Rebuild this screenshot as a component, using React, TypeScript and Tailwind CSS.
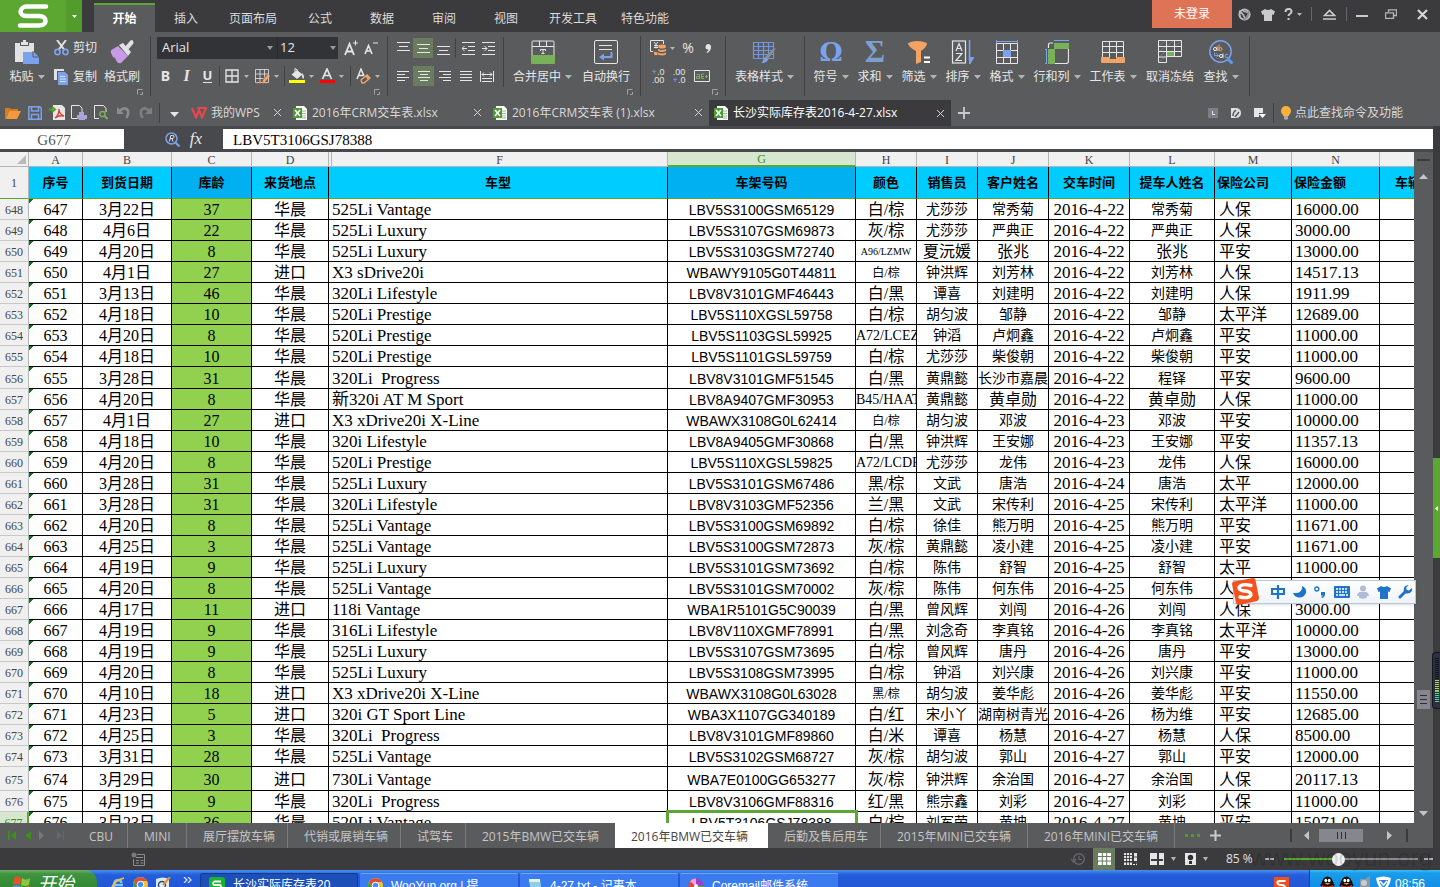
import React from "react";
import type { ReactNode } from "react";

type DrawProps = { w: number; h: number; children: ReactNode; className?: string };

function Draw({ w, h, children, className }: DrawProps) {
  return (
    <svg width={w} height={h} viewBox={`0 0 ${w} ${h}`} fill="none" className={className ?? "shrink-0"} aria-hidden="true">
      {children}
    </svg>
  );
}

const Caret = ({ light = false }: { light?: boolean }) => (
  <Draw w={7} h={4}>
    <path d="M0 0h7L3.5 4z" fill={light ? "#f5f5f5" : "#b4b5b7"} />
  </Draw>
);

const CornerMark = () => (
  <Draw w={6} h={6}>
    <path d="M.5 5.500V.5H5.500M3 5.500H5.500V3" stroke="#a0a1a3" />
  </Draw>
);

const ThinCross = () => (
  <Draw w={9} h={9}>
    <path d="M1 1l7 7M8 1L1 8" stroke="#d4d5d6" />
  </Draw>
);

/* ---------- Title bar ---------- */

const menuTabs = ["插入", "页面布局", "公式", "数据", "审阅", "视图", "开发工具", "特色功能"];

function TitleBar() {
  return (
    <header className="flex h-8 shrink-0 items-start bg-[#3b3b3d] text-xs text-[#dcdcdc]">
      <button aria-label="WPS 表格" className="flex h-8 w-[66px] items-center justify-center bg-[#5ba731]">
        <Draw w={32} h={26}>
          <path d="M29 3.500H9.500a6 6 0 0 0-6 5c0 3 3 4.500 6 4.500H22c4 0 6.500 2 6.500 5s-3 4.500-6.500 4.500H3" stroke="#fff" strokeWidth="4.500" strokeLinecap="round" strokeLinejoin="round" />
        </Draw>
      </button>
      <button aria-label="菜单" className="flex h-8 w-4 items-center justify-center bg-[#529c2b]">
        <Draw w={5} h={3}><path d="M0 0h5L2.500 3z" fill="#fff" /></Draw>
      </button>
      <nav className="ml-3 flex pt-[3px]">
        <button className="h-[29px] w-[61px] border-t-2 border-[#5ba731] bg-[#5a5b5d] font-bold text-white">开始</button>
        {menuTabs.map((t) => (
          <button key={t} className="h-[29px] min-w-[62px] px-3 pt-[2px]">{t}</button>
        ))}
      </nav>
      <div className="ml-auto flex h-7 items-center">
        <button className="h-7 w-20 bg-[#df7356] text-white">未登录</button>
        <button aria-label="社区" className="flex h-7 w-6 items-center justify-center">
          <Draw w={13} h={13}>
            <circle cx="6.500" cy="6.500" r="5" stroke="#b9babb" strokeWidth="2.200" />
            <path d="M1 3q5 3 6.500 9" stroke="#b9babb" strokeWidth="1.600" />
            <path d="M12 4Q7 5 4 2" stroke="#b9babb" strokeWidth="1.600" />
            <path d="M5.500 12Q10 9 11 3" stroke="#8d8e90" strokeWidth="1.600" />
          </Draw>
        </button>
        <button aria-label="皮肤" className="flex h-7 w-6 items-center justify-center">
          <Draw w={14} h={13}>
            <path d="M4 1q3 2 6 0l4 2.500-1.500 3.500L11 6.500V13H3V6.500L1.500 7 0 3.500z" fill="#c9cacb" />
          </Draw>
        </button>
        <button aria-label="帮助" className="flex h-7 w-[26px] items-center justify-center gap-1">
          <Draw w={9} h={12}>
            <path d="M1.500 4c0-4 6-4 6-.5 0 2.500-3 2-3 4.500" stroke="#c9cacb" strokeWidth="2" />
            <path d="M3.500 10h2v2h-2z" fill="#c9cacb" />
          </Draw>
          <Draw w={5} h={3}><path d="M0 0h5L2.500 3z" fill="#b4b5b7" /></Draw>
        </button>
        <span className="ml-[5px] h-[14px] w-px bg-[#66676a]" />
        <button aria-label="收起功能区" className="flex h-7 w-[34px] items-center justify-center">
          <Draw w={13} h={11}><path d="M1.500 6.500l5-5 5 5zM0 10h13" stroke="#c9cacb" strokeWidth="1.600" /></Draw>
        </button>
        <span className="h-[14px] w-px bg-[#66676a]" />
        <button aria-label="最小化" className="flex h-7 w-[30px] items-center justify-center pt-1">
          <Draw w={12} h={2}><path d="M0 1h12" stroke="#c9cacb" strokeWidth="2" /></Draw>
        </button>
        <button aria-label="还原" className="flex h-7 w-[27px] items-center justify-center">
          <Draw w={12} h={10}><path d="M3.500 3V.8h8v5.700H9M.5 3.800h8v5.500h-8z" stroke="#b4b5b7" strokeWidth="1.300" /></Draw>
        </button>
        <button aria-label="关闭" className="flex h-7 w-9 items-center justify-center">
          <Draw w={11} h={11}><path d="M1 1l9 9M10 1l-9 9" stroke="#d4d5d6" strokeWidth="2.200" /></Draw>
        </button>
      </div>
    </header>
  );
}

/* ---------- Ribbon ---------- */

function Group({ className, children, corner = false }: { className: string; children: ReactNode; corner?: boolean }) {
  return (
    <div className={`mt-1 flex h-[60px] shrink-0 flex-col border-r border-[#3f4042] pt-px ${className}`}>
      <div className="flex h-[52px]">{children}</div>
      {corner && <div className="flex justify-end pr-[7px]"><CornerMark /></div>}
    </div>
  );
}

function Big({ label, icon, className, caret = true }: { label: string; icon: ReactNode; className: string; caret?: boolean }) {
  return (
    <button className={`flex shrink-0 flex-col items-center pt-[3px] ${className}`}>
      <span className="flex h-7 items-start justify-center">{icon}</span>
      <span className="flex h-[18px] items-center gap-1 leading-[18px] whitespace-nowrap">
        {label}
        {caret && <Caret />}
      </span>
    </button>
  );
}

const Rows = ({ children, className = "" }: { children: ReactNode; className?: string }) => (
  <div className={`flex shrink-0 flex-col gap-[6px] ${className}`}>{children}</div>
);
const Row = ({ children, className = "" }: { children: ReactNode; className?: string }) => (
  <div className={`flex h-[22px] items-center ${className}`}>{children}</div>
);
const Sep = ({ className = "" }: { className?: string }) => <span className={`h-5 w-px shrink-0 bg-[#3f4042] ${className}`} />;

function IconBtn({ label, children, className = "w-[21px]" }: { label: string; children: ReactNode; className?: string }) {
  return (
    <button aria-label={label} className={`flex h-5 shrink-0 items-center justify-center ${className}`}>
      {children}
    </button>
  );
}

function DropBtn({ label, children }: { label: string; children: ReactNode }) {
  return (
    <button aria-label={label} className="flex h-5 w-[30px] shrink-0 items-center gap-1 pl-1">
      <span className="flex w-4 justify-center">{children}</span>
      <Draw w={5} h={3}><path d="M0 0h5L2.500 3z" fill="#b4b5b7" /></Draw>
    </button>
  );
}

const W = "#e6e6e6";
const BLUE = "#7ba2ec";
const GREEN = "#78b159";
const ORANGE = "#f2a365";

const lines = (d: string, w = 13, h = 11) => (
  <Draw w={w} h={h}><path d={d} stroke={W} /></Draw>
);

const PasteIcon = (
  <Draw w={26} h={25}>
    <path d="M1 3h5v3h9V3h5v9h-9v10H1z" fill="#e2e2e2" />
    <path d="M7 5V2h2V0h3v2h2v3z" fill="#e2e2e2" />
    <path d="M9 12h11l5 5v7H9z" fill={BLUE} />
    <path d="M19 11v6h6" stroke="#5a5b5d" />
  </Draw>
);
const CutIcon = (
  <Draw w={15} h={16}>
    <path d="M3 0l7.500 10M12 0L4.500 10" stroke="#e2e2e2" strokeWidth="2" />
    <circle cx="3.500" cy="12" r="2.600" stroke={BLUE} strokeWidth="1.600" />
    <circle cx="11.500" cy="12" r="2.600" stroke={BLUE} strokeWidth="1.600" />
  </Draw>
);
const CopyIcon = (
  <Draw w={15} h={16}>
    <path d="M0 0h10v2H3v9H0z" fill="#e2e2e2" />
    <path d="M4 3h7l3 3v10H4z" fill={BLUE} />
    <path d="M6 7.500h5M6 10h6M6 12.500h6" stroke="#d8e3fa" />
  </Draw>
);
const BrushIcon = (
  <Draw w={24} h={24}>
    <path d="M14 8l6-7q2-2 3 0t0 3l-6 7z" fill="#e2e2e2" />
    <path d="M9 5l4-2 8 9-3 4z" fill="#e2e2e2" />
    <path d="M8 6l10 10-7 7q-2 1-4-1l-2-4-2-1-2-4q-1-3 2-4z" fill="#c79be8" />
  </Draw>
);
const MergeIcon = (
  <Draw w={24} h={24}>
    <path d="M1 16V2q0-1 1-1h20q1 0 1 1v14M1 6.500h22M8.500 1v5.500M15.500 1v5.500" stroke={W} />
    <path d="M0 15h24v8q0 1-1 1H1q-1 0-1-1z" fill={GREEN} />
    <path d="M9.500 11V9.500h5V11M12 9.500v4M10.500 13.500h3" stroke={W} />
  </Draw>
);
const WrapIcon = (
  <Draw w={24} h={24}>
    <rect x=".5" y=".5" width="23" height="23" rx="1.500" stroke={W} />
    <path d="M5 5.500h13M5 9.500h13" stroke={W} />
    <path d="M17.500 12v5H9" stroke={BLUE} strokeWidth="2" />
    <path d="M5 17l5-3.500v7z" fill={BLUE} />
  </Draw>
);
const TableStyleIcon = (
  <Draw w={25} h={24}>
    <path d="M1.500 2.500h20v16h-20zM1.500 6.500h20M1.500 10.500h20M1.500 14.500h20M6.500 2v16M11.500 2v16M16.500 2v16" stroke="#6f95e3" strokeWidth="1.200" />
    <path d="M24 8l-8 11-3-2L21 9z" fill="#8e8f91" />
    <path d="M13 17l3 2q0 4-7 4 2-1 2-3z" fill={BLUE} />
  </Draw>
);
const FunnelIcon = (
  <Draw w={24} h={24}>
    <path d="M1 3q9-4 19 0 0 4-6 8v11l-5 2V11Q1 7 1 3z" fill={ORANGE} />
    <path d="M17 17.500h6M17 22h6" stroke="#fff" strokeWidth="2" />
  </Draw>
);
const SortIcon = (
  <Draw w={24} h={24}>
    <rect x="1.500" y="1" width="13" height="22" stroke={W} strokeWidth="1.200" />
    <path d="M5 11l3-7.500L11 11M6 8.500h4M5 13.500h6L5 20.500h6" stroke={W} strokeWidth="1.200" />
    <path d="M18.500 0v20" stroke={BLUE} strokeWidth="1.600" />
    <path d="M18 17h5.500l-4 7H18z" fill={BLUE} />
  </Draw>
);
const FormatIcon = (
  <Draw w={24} h={24}>
    <path d="M1 1.500h22M1.500 0v3M22.500 0v3" stroke={BLUE} />
    <path d="M1.500 3.500h21v20h-21zM8.500 3.500v20M15.500 3.500v20M1.500 10.500h21M1.500 17.500h21" stroke={W} />
    <path d="M8 10h8v7H8z" fill={BLUE} />
  </Draw>
);
const RowColIcon = (
  <Draw w={24} h={24}>
    <path d="M9 .5h15M1.500 9v15M0 9.500h2M0 23.500h2" stroke={BLUE} />
    <path d="M9 3h15v6H9zM3 9h7v15H3z" fill={GREEN} />
    <path d="M3.500 8V5q0-2 2-2H8M23.500 9v12q0 2.500-2.500 2.500H10" stroke={W} strokeWidth="1.200" />
  </Draw>
);
const WorksheetIcon = (
  <Draw w={24} h={24}>
    <path d="M1.500 18V1.500h21V18M1.500 6.500h21M1.500 12.500h21M8.500 1.500v16M15.500 1.500v16" stroke={W} />
    <path d="M1 17h8v2h6v-2h8q1 0 1 1v4q0 1-1 1H1q-1 0-1-1v-4q0-1 1-1z" fill={ORANGE} />
  </Draw>
);
const FreezeIcon = (
  <Draw w={24} h={24}>
    <path d="M1 6l6-5M9 6l6-5M17 6l6-5M1 12l6-5M1 17l6-5M1 22l6-5" stroke="#77787a" />
    <path d="M.5 .5h23v16h-15v6h-8zM.5 6.500h23M.5 11.500h23M8.500 .5v16M16.500 .5v16M.5 17h8" stroke={W} />
    <path d="M9 12h7v4H9z" fill={GREEN} />
  </Draw>
);
const FindIcon = (
  <Draw w={24} h={24}>
    <circle cx="11.500" cy="11.500" r="10.700" stroke={BLUE} strokeWidth="1.500" />
    <path d="M18.500 18.500l5 5" stroke="#5b9bf0" strokeWidth="3" />
    <ellipse cx="6" cy="9" rx="1.500" ry="1.600" stroke={W} />
    <path d="M8 6.500v4.500" stroke={W} />
    <path d="M10 4.500V11" stroke={ORANGE} />
    <ellipse cx="11.500" cy="9" rx="1.500" ry="1.600" stroke={ORANGE} />
    <path d="M5.500 12.500v3H9M7.500 13.500l2 2-2 2" stroke={BLUE} />
    <ellipse cx="12" cy="16" rx="1.500" ry="1.600" stroke={W} />
    <path d="M14 13.500V18" stroke={W} />
    <path d="M19 14.500q-3-1-3 1.500t3 1.500" stroke={BLUE} />
  </Draw>
);

function Ribbon() {
  return (
    <section aria-label="功能区" className="flex h-[67px] shrink-0 overflow-hidden bg-[#5a5b5d] text-xs text-[#e6e6e6]">
      <Group className="w-[151px]" corner>
        <Big label="粘贴" icon={PasteIcon} className="w-[54px]" />
        <Rows className="w-11">
          <button className="flex h-[22px] items-center gap-1">{CutIcon}剪切</button>
          <button className="flex h-[22px] items-center gap-1 pt-[2px]">{CopyIcon}复制</button>
        </Rows>
        <Big label="格式刷" icon={BrushIcon} className="w-12" caret={false} />
      </Group>

      <Group className="w-[237px]" corner>
        <Rows>
          <Row className="pl-[6px]">
            <span className="flex h-[22px] w-[120px] items-center bg-[#323336] pr-1">
              <select aria-label="字体" className="h-[22px] grow appearance-none bg-transparent pl-[5px] text-[13px] outline-none">
                <option>Arial</option>
              </select>
              <Draw w={6} h={4}><path d="M0 0h6L3 4z" fill="#9a9b9d" /></Draw>
            </span>
            <span className="flex h-[22px] w-[61px] items-center border-l border-[#28292b] bg-[#323336] pr-[2px]">
              <select aria-label="字号" className="h-[22px] w-12 grow appearance-none bg-transparent pl-[2px] text-[13px] outline-none">
                <option>12</option>
              </select>
              <Draw w={6} h={4}><path d="M0 0h6L3 4z" fill="#9a9b9d" /></Draw>
            </span>
            <IconBtn label="增大字号" className="ml-[3px] w-5">
              <Draw w={14} h={16}>
                <path d="M1 15L5.500 4 10 15M2.500 11.500h6" stroke={W} strokeWidth="1.800" />
                <path d="M9 3h5M11.500.5v5" stroke={W} />
              </Draw>
            </IconBtn>
            <IconBtn label="减小字号" className="w-5">
              <Draw w={14} h={16}>
                <path d="M1 14L4.500 5.500 8 14M2 11h5" stroke={W} strokeWidth="1.600" />
                <path d="M9 3h5" stroke={W} />
              </Draw>
            </IconBtn>
          </Row>
          <Row className="pl-1">
            <IconBtn label="加粗"><span className="font-['Noto_Sans'] text-sm leading-4 font-bold">B</span></IconBtn>
            <IconBtn label="倾斜"><span className="font-['Liberation_Serif'] text-base leading-4 font-bold italic">I</span></IconBtn>
            <IconBtn label="下划线"><span className="border-b border-[#e6e6e6] font-['Noto_Sans'] text-[13px] leading-[13px] font-bold">U</span></IconBtn>
            <Sep className="ml-px" />
            <DropBtn label="边框">
              <Draw w={14} h={14}><path d="M1 1h12v12H1zM7 1v12M1 7h12" stroke={W} strokeWidth="1.300" /></Draw>
            </DropBtn>
            <DropBtn label="绘制边框">
              <Draw w={15} h={15}>
                <path d="M.5.5h13v13H.5zM5 .5v13M9.500.5v8M.5 5h13M.5 9.500h8" stroke={W} strokeWidth=".8" />
                <path d="M7 14l1-3 5-6 2 2-5 6z" fill={ORANGE} />
                <path d="M1 14h12" stroke="#f06a3a" strokeDasharray="2 1" />
              </Draw>
            </DropBtn>
            <Sep className="ml-1" />
            <DropBtn label="填充颜色">
              <Draw w={16} h={16}>
                <path d="M2.500 6.500L8 2l5.500 4.500L8 11z" fill={W} />
                <path d="M6 .5v4M6 .5l3 2" stroke={W} />
                <path d="M13 5q3 3 1.500 6-2-1-1.500-6z" fill={W} />
                <path d="M0 12h16v3H0z" fill="#ff0" />
              </Draw>
            </DropBtn>
            <DropBtn label="字体颜色">
              <Draw w={16} h={16}>
                <path d="M3.500 11L8 1l4.500 10M5 7.500h6" stroke={W} strokeWidth="1.700" />
                <path d="M1 12h15v3H1z" fill="red" />
              </Draw>
            </DropBtn>
            <Sep className="ml-[5px]" />
            <DropBtn label="清除">
              <Draw w={15} h={16}>
                <path d="M1 11L5 1l3 7M2.500 7.500h5" stroke={W} strokeWidth="1.500" />
                <path d="M5 12l6-5 3 3-6 5H6z" stroke={ORANGE} strokeWidth="1.400" /><path d="M9 8.500l3 3 2-2-3-2.500z" fill={ORANGE} />
              </Draw>
            </DropBtn>
          </Row>
        </Rows>
      </Group>

      <Group className="w-[253px]" corner>
        <Rows className="h-[50px] w-[116px] border-r border-[#3f4042]">
          <Row className="pl-[5px]">
            <IconBtn label="顶端对齐" className="w-5 pb-1">{lines("M0 .5h13M2 4.500h9M0 8.500h13", 13, 9)}</IconBtn>
            <IconBtn label="垂直居中" className="w-5 bg-[#6a7c60]">{lines("M0 .5h13M2 4.500h9M0 8.500h13", 13, 9)}</IconBtn>
            <IconBtn label="底端对齐" className="w-5 pt-1">{lines("M0 .5h13M2 4.500h9M0 8.500h13", 13, 9)}</IconBtn>
            <Sep className="mx-[2px]" />
            <IconBtn label="减少缩进" className="w-5">{lines("M0 .5h13M6 4.500h7M6 8.500h7M0 12.500h13M0 6.500h5M2.500 4L0 6.500 2.500 9", 13, 13)}</IconBtn>
            <IconBtn label="增加缩进" className="w-5">{lines("M0 .5h13M6 4.500h7M6 8.500h7M0 12.500h13M0 6.500h5M2.500 4L5 6.500 2.500 9", 13, 13)}</IconBtn>
          </Row>
          <Row className="pl-1">
            <IconBtn label="左对齐">{lines("M0 .5h12M0 3.500h8M0 6.500h12M0 9.500h8", 12, 10)}</IconBtn>
            <IconBtn label="水平居中" className="w-[21px] bg-[#6a7c60]">{lines("M0 .5h12M2 3.500h8M0 6.500h12M2 9.500h8", 12, 10)}</IconBtn>
            <IconBtn label="右对齐">{lines("M0 .5h12M4 3.500h8M0 6.500h12M4 9.500h8", 12, 10)}</IconBtn>
            <IconBtn label="两端对齐">{lines("M0 .5h12M0 3.500h12M0 6.500h12M0 9.500h12", 12, 10)}</IconBtn>
            <IconBtn label="分散对齐">{lines("M.5 0v11M13.500 0v11M2 3.500h10M4 1.500L2 3.500l2 2M10 1.500l2 2-2 2M2 7.500h10M2 10.500h10", 14, 11)}</IconBtn>
          </Row>
        </Rows>
        <Big label="合并居中" icon={MergeIcon} className="w-[77px]" />
        <Big label="自动换行" icon={WrapIcon} className="w-[50px]" caret={false} />
      </Group>

      <Group className="w-[85px]" corner>
        <Rows>
          <Row className="pl-[5px]">
            <DropBtn label="会计格式">
              <Draw w={16} h={16}>
                <path d="M3 11.500H.5V.5h13V4" stroke={W} />
                <path d="M4 2l2 2.500L8 2M6 4.500v4M4 5.500h4M4 7.500h4" stroke={W} />
                <ellipse cx="12" cy="6.500" rx="4" ry="2" fill={ORANGE} />
                <path d="M8 9q4 2 8 0v2q-4 2-8 0zM8 12.500q4 2 8 0v2q-4 2-8 0zM4 11.500q2 1 3.500.5v3q-2 .5-3.500-.5z" fill={ORANGE} />
              </Draw>
            </DropBtn>
            <IconBtn label="百分比" className="ml-[2px] w-5"><span className="text-sm leading-4">%</span></IconBtn>
            <IconBtn label="千位分隔" className="w-5">
              <Draw w={6} h={9}><path d="M3 0q3 0 3 3 0 4-4 6l-.5-1Q3.500 7 3.500 5.500H3Q.5 5.500.5 3T3 0z" fill={W} /></Draw>
            </IconBtn>
          </Row>
          <Row className="gap-px pl-[7px]">
            <IconBtn label="增加小数" className="w-5 flex-col">
              <span className="font-['Liberation_Sans'] text-[9px] leading-2"><span className="text-[#7ba2ec]">+</span>.0</span>
              <span className="font-['Liberation_Sans'] text-[9px] leading-2">.00</span>
            </IconBtn>
            <IconBtn label="减少小数" className="w-5 flex-col">
              <span className="font-['Liberation_Sans'] text-[9px] leading-2">.00</span>
              <span className="font-['Liberation_Sans'] text-[9px] leading-2"><span className="text-[#7ba2ec]">+</span>.0</span>
            </IconBtn>
            <IconBtn label="单元格格式" className="ml-1 w-4">
              <Draw w={16} h={12}>
                <path d="M.5.5h15v11H.500z" stroke={W} />
                <path d="M2.500 4.500h3v4h-3v-2h3M10 4H7.500v4.500H10M7.500 6.500H10M11 6.500h3M12.500 5v3" stroke={GREEN} />
              </Draw>
            </IconBtn>
          </Row>
        </Rows>
      </Group>

      <Group className="w-[79px]">
        <Big label="表格样式" icon={TableStyleIcon} className="w-[77px]" />
      </Group>

      <Group className="w-[445px] pl-1">
        <Big label="符号" className="w-11" icon={<span className="font-['DejaVu_Serif'] text-[26px] leading-6 font-bold text-[#7ba2ec]">Ω</span>} />
        <Big label="求和" className="w-11" icon={<span className="font-['Liberation_Serif'] text-[31px] leading-6 font-bold text-[#7f9fd0]">Σ</span>} />
        <Big label="筛选" className="w-11" icon={FunnelIcon} />
        <Big label="排序" className="w-11" icon={SortIcon} />
        <Big label="格式" className="w-11" icon={FormatIcon} />
        <Big label="行和列" className="w-14" icon={RowColIcon} />
        <Big label="工作表" className="w-14" icon={WorksheetIcon} />
        <Big label="取消冻结" className="w-[58px]" icon={FreezeIcon} caret={false} />
        <Big label="查找" className="w-11" icon={FindIcon} />
      </Group>
    </section>
  );
}

/* ---------- Quick access and document tabs ---------- */

const SheetFileIcon = () => (
  <Draw w={16} h={16}>
    <path d="M4 1h8l3 3v11H4z" fill="#fff" />
    <path d="M10 6h4M10 8.500h4M10 11h4M10 13h4" stroke="#9bb48c" />
    <path d="M1 3h9v10H1z" fill="#4b9a32" />
    <path d="M3 5l5 6M8 5l-5 6" stroke="#fff" strokeWidth="1.600" />
  </Draw>
);

function DocTab({ title, icon, className }: { title: string; icon: ReactNode; className: string }) {
  return (
    <div className={`flex h-[26px] shrink-0 items-center gap-1 pr-[6px] pl-1 ${className}`}>
      {icon}
      <button className="grow text-left whitespace-nowrap">{title}</button>
      <button aria-label={`关闭 ${title}`}><ThinCross /></button>
    </div>
  );
}

function DocBar() {
  return (
    <div className="flex h-[27px] shrink-0 items-center bg-[#5a5b5d] pl-[2px] text-xs text-[#d8d9da]">
      <IconBtn label="打开" className="w-[22px]">
        <Draw w={16} h={12}><path d="M0 1h5l1 1h7v2H4L1 12H0z" fill="#d97a1c" /><path d="M4 4h12l-4 8H1z" fill="#f59a3a" /></Draw>
      </IconBtn>
      <IconBtn label="保存" className="w-[22px]">
        <Draw w={14} h={14}><path d="M.8.8h11l1.500 1.500v11H.8z" stroke={BLUE} strokeWidth="1.500" /><path d="M3.500 1v4h7V1M3.500 13V8.500h7V13" stroke={BLUE} strokeWidth="1.500" /></Draw>
      </IconBtn>
      <IconBtn label="输出为PDF" className="w-[22px]">
        <Draw w={16} h={15}>
          <path d="M4 0h9l3 3v12H4z" fill="#e6e6e6" />
          <path d="M0 4.500h4M3 2l3 2.500L3 7" stroke="#56a02c" strokeWidth="2" />
          <path d="M6 13q4-3 4-9 0 5 5 7-5-1-9 2z" stroke="#e03c31" strokeWidth="1.300" />
        </Draw>
      </IconBtn>
      <IconBtn label="打印" className="w-[22px]">
        <Draw w={16} h={15}><path d="M7 13.500H.5V.5h8L11 3v4" stroke={W} /><path d="M8 7h5v3H8zM6 10h10v4h-2v1H8v-1H6z" fill="#a9a3dc" /></Draw>
      </IconBtn>
      <IconBtn label="打印预览" className="w-[22px]">
        <Draw w={14} h={15}><path d="M5 13.500H.5V.5h9l2.500 3V7" stroke={W} /><circle cx="8.500" cy="9" r="2.600" stroke={GREEN} strokeWidth="1.500" /><path d="M10.500 11l3 3" stroke={GREEN} strokeWidth="2" /></Draw>
      </IconBtn>
      <IconBtn label="撤消" className="w-[22px]">
        <Draw w={13} h={13}><path d="M2 5.500Q6 1 9.500 3t0 9" stroke="#8b8c8e" strokeWidth="2.600" /><path d="M0 1v7h7z" fill="#8b8c8e" /></Draw>
      </IconBtn>
      <IconBtn label="恢复" className="w-[22px]">
        <Draw w={13} h={13}><path d="M11 5.500Q7 1 3.500 3t0 9" stroke="#7e7f81" strokeWidth="2.600" /><path d="M13 1v7H6z" fill="#7e7f81" /></Draw>
      </IconBtn>
      <Sep className="mx-[3px]" />
      <IconBtn label="自定义" className="mr-[2px] w-[22px] pt-1">
        <Draw w={9} h={5}><path d="M0 0h9L4.500 5z" fill="#e6e6e6" /></Draw>
      </IconBtn>
      <DocTab title="我的WPS" className="w-[101px]" icon={
        <Draw w={16} h={12}><path d="M1 1l4 9.500L8 3l3 7.500L15 1H6.500" stroke="#e5484b" strokeWidth="2.200" /></Draw>
      } />
      <DocTab title="2016年CRM交车表.xlsx" className="w-[200px]" icon={<SheetFileIcon />} />
      <DocTab title="2016年CRM交车表 (1).xlsx" className="w-[221px]" icon={<SheetFileIcon />} />
      <DocTab title="长沙实际库存表2016-4-27.xlsx" className="w-[242px] self-end bg-[#3b3b3d] text-white" icon={<SheetFileIcon />} />
      <IconBtn label="新建" className="w-[26px]">
        <Draw w={12} h={12}><path d="M6 0v12M0 6h12" stroke="#c9cacb" strokeWidth="1.800" /></Draw>
      </IconBtn>
      <div className="mr-[37px] ml-auto flex items-center">
        <IconBtn label="在线" className="w-[23px]">
          <Draw w={10} h={10}><path d="M0 0h10v10H0z" fill="#7c7e8a" /><path d="M4.500 3v3.500H7" stroke="#e6e6e6" /></Draw>
        </IconBtn>
        <IconBtn label="文档漫游" className="w-[23px]">
          <Draw w={10} h={10}><path d="M0 0h6q4 1 4 5t-4 5H0z" fill="#dedede" /><path d="M2 8q0-4 3-6M4 9l4-5" stroke="#55565a" strokeWidth="1.500" /></Draw>
        </IconBtn>
        <IconBtn label="窗口" className="w-[25px]">
          <Draw w={12} h={10}><path d="M0 0h9v5H5v4H0z" fill="#e6e6e6" /><path d="M5 6h7l-3.500 4z" fill="#fff" /></Draw>
        </IconBtn>
        <Sep className="h-4" />
        <button className="flex items-center gap-1 pl-[7px]">
          <Draw w={10} h={14}><circle cx="5" cy="5" r="5" fill="#f7b13c" /><path d="M2 9h6v1H2z" fill="#f7b13c" /><path d="M3 10h4v3l-2 1-2-1z" fill="#a5a8b5" /></Draw>
          点此查找命令及功能
        </button>
      </div>
    </div>
  );
}

function FormulaBar() {
  return (
    <div className="flex h-[26px] shrink-0 items-center bg-[#48494d]">
      <input aria-label="名称框" defaultValue="G677" className="h-5 w-[124px] bg-white pt-[2px] pr-4 text-center font-['Liberation_Serif'] text-[15px] leading-5 text-[#555]" />
      <div className="flex w-[99px] items-center justify-end gap-[6px] pr-[17px]">
        <Draw w={15} h={15}>
          <circle cx="6.500" cy="6.500" r="5.500" stroke={BLUE} strokeWidth="1.500" />
          <path d="M10.500 10.500l4 4" stroke={BLUE} strokeWidth="2.200" />
          <path d="M4.500 9.500l1.300-6h2q1.700 0 1.200 1.800-.3 1.200-2 1.200H5.500M7 6.500l1 3" stroke="#e6e6e6" />
        </Draw>
        <button aria-label="插入函数" className="w-5 font-['Liberation_Serif'] text-[17px] leading-5 text-[#e6e6e6] italic">fx</button>
      </div>
      <input aria-label="编辑栏" defaultValue="LBV5T3106GSJ78388" className="h-5 min-w-0 grow bg-white pt-[2px] pl-[10px] font-['Liberation_Serif'] text-[15px] leading-5 text-black" />
    </div>
  );
}

/* ---------- Worksheet ---------- */

const raw = `648|647|3月22日|37|华晨|525Li Vantage|LBV5S3100GSM65129|白/棕|尤莎莎|常秀菊|2016-4-22|常秀菊|人保|16000.00
649|648|4月6日|22|华晨|525Li Luxury|LBV5S3107GSM69873|灰/棕|尤莎莎|严典正|2016-4-22|严典正|人保|3000.00
650|649|4月20日|8|华晨|525Li Luxury|LBV5S3103GSM72740|A96/LZMW|夏沅媛|张兆|2016-4-22|张兆|平安|13000.00
651|650|4月1日|27|进口|X3 sDrive20i|WBAWY9105G0T44811|白/棕|钟洪辉|刘芳林|2016-4-22|刘芳林|人保|14517.13
652|651|3月13日|46|华晨|320Li Lifestyle|LBV8V3101GMF46443|白/黑|谭喜|刘建明|2016-4-22|刘建明|人保|1911.99
653|652|4月18日|10|华晨|520Li Prestige|LBV5S110XGSL59758|白/棕|胡匀波|邹静|2016-4-22|邹静|太平洋|12689.00
654|653|4月20日|8|华晨|520Li Prestige|LBV5S1103GSL59925|A72/LCEZ|钟滔|卢炯鑫|2016-4-22|卢炯鑫|平安|11000.00
655|654|4月18日|10|华晨|520Li Prestige|LBV5S1101GSL59759|白/棕|尤莎莎|柴俊朝|2016-4-22|柴俊朝|平安|11000.00
656|655|3月28日|31|华晨|320Li  Progress|LBV8V3101GMF51545|白/黑|黄鼎懿|长沙市嘉晨|2016-4-22|程铎|平安|9600.00
657|656|4月20日|8|华晨|新320i AT M Sport|LBV8A9407GMF30953|B45/HAAT|黄鼎懿|黄卓勋|2016-4-22|黄卓勋|人保|11000.00
658|657|4月1日|27|进口|X3 xDrive20i X-Line|WBAWX3108G0L62414|白/棕|胡匀波|邓波|2016-4-23|邓波|平安|10000.00
659|658|4月18日|10|华晨|320i Lifestyle|LBV8A9405GMF30868|白/黑|钟洪辉|王安娜|2016-4-23|王安娜|平安|11357.13
660|659|4月20日|8|华晨|520Li Prestige|LBV5S110XGSL59825|A72/LCDF|尤莎莎|龙伟|2016-4-23|龙伟|人保|16000.00
661|660|3月28日|31|华晨|525Li Luxury|LBV5S3101GSM67486|黑/棕|文武|唐浩|2016-4-24|唐浩|太平|12000.00
662|661|3月28日|31|华晨|320Li Lifestyle|LBV8V3103GMF52356|兰/黑|文武|宋传利|2016-4-25|宋传利|太平洋|11000.00
663|662|4月20日|8|华晨|525Li Vantage|LBV5S3100GSM69892|白/棕|徐佳|熊万明|2016-4-25|熊万明|平安|11671.00
664|663|4月25日|3|华晨|525Li Vantage|LBV5S3100GSM72873|灰/棕|黄鼎懿|凌小建|2016-4-25|凌小建|平安|11671.00
665|664|4月19日|9|华晨|525Li Luxury|LBV5S3101GSM73692|白/棕|陈伟|舒智|2016-4-25|舒智|太平|11000.00
666|665|4月20日|8|华晨|525Li Vantage|LBV5S3101GSM70002|灰/棕|陈伟|何东伟|2016-4-25|何东伟|人保|11000.00
667|666|4月17日|11|进口|118i Vantage|WBA1R5101G5C90039|白/黑|曾风辉|刘闯|2016-4-26|刘闯|人保|3000.00
668|667|4月19日|9|华晨|316Li Lifestyle|LBV8V110XGMF78991|白/黑|刘念奇|李真铭|2016-4-26|李真铭|太平洋|10000.00
669|668|4月19日|9|华晨|525Li Luxury|LBV5S3107GSM73695|白/棕|曾风辉|唐丹|2016-4-26|唐丹|平安|13000.00
670|669|4月20日|8|华晨|525Li Luxury|LBV5S3108GSM73995|白/棕|钟滔|刘兴康|2016-4-26|刘兴康|平安|11000.00
671|670|4月10日|18|进口|X3 xDrive20i X-Line|WBAWX3108G0L63028|黑/棕|胡匀波|姜华彪|2016-4-26|姜华彪|平安|11550.00
672|671|4月23日|5|进口|320i GT Sport Line|WBA3X1107GG340189|白/红|宋小丫|湖南树青光|2016-4-26|杨为维|平安|12685.00
673|672|4月25日|3|华晨|320Li  Progress|LBV8V3101GMF89860|白/米|谭喜|杨慧|2016-4-27|杨慧|人保|8500.00
674|673|3月31日|28|华晨|525Li Vantage|LBV5S3102GSM68727|灰/棕|胡匀波|郭山|2016-4-27|郭山|平安|12000.00
675|674|3月29日|30|进口|730Li Vantage|WBA7E0100GG653277|灰/棕|钟洪辉|余治国|2016-4-27|余治国|人保|20117.13
676|675|4月19日|9|华晨|320Li  Progress|LBV8V3106GMF88316|红/黑|熊宗鑫|刘彩|2016-4-27|刘彩|人保|11000.00
677|676|3月23日|36|华晨|520Li Vantage|LBV5T3106GSJ78388|白/棕|刘军荣|黄坤|2016-4-27|黄坤|平安|15071.00`;

const data = raw.split("\n").map((line) => line.split("|"));

const columns = [
  { id: "A", title: "序号", col: "w-[54px]" },
  { id: "B", title: "到货日期", col: "w-[89px]" },
  { id: "C", title: "库龄", col: "w-[80px]" },
  { id: "D", title: "来货地点", col: "w-[77px]" },
  { id: "F", title: "车型", col: "w-[339px]" },
  { id: "G", title: "车架号码", col: "w-[188px]" },
  { id: "H", title: "颜色", col: "w-[61px]" },
  { id: "I", title: "销售员", col: "w-[61px]" },
  { id: "J", title: "客户姓名", col: "w-[71px]" },
  { id: "K", title: "交车时间", col: "w-[81px]" },
  { id: "L", title: "提车人姓名", col: "w-[85px]" },
  { id: "M", title: "保险公司", col: "w-[77px]" },
  { id: "N", title: "保险金额", col: "w-[88px]" },
];

const textStyle: Record<string, string> = {
  A: "justify-center text-base",
  B: "justify-center text-base",
  C: "justify-center text-base",
  D: "justify-center text-base",
  F: "pl-[3px] text-[17px]",
  G: "justify-center font-['Liberation_Sans'] text-sm",
  H: "justify-center text-base",
  I: "justify-center text-sm",
  J: "justify-center text-sm",
  K: "justify-center text-[17px]",
  L: "justify-center text-sm",
  M: "pl-1 text-base",
  N: "pl-[3px] text-[17px]",
};

const largeNames = new Set(["夏沅媛", "张兆", "黄卓勋"]);
const smallColour = new Set(["651", "658", "671"]);

const rowHeight: Record<string, string> = { "656": "h-[22px]", "675": "h-6" };

function styleFor(id: string, row: string, value: string) {
  if (largeNames.has(value)) return "justify-center text-base";
  if (value === "A96/LZMW") return "justify-center text-[10px]";
  if (id === "H" && smallColour.has(row)) return "justify-center text-xs";
  if (id === "H" && value.length > 5) return "justify-start text-sm";
  return textStyle[id];
}

function Cell({ id, row, value }: { id: string; row: string; value: string }) {
  const selected = id === "G" && row === "677";
  const fill =
    id === "C"
      ? "bg-[#92d050]"
      : id === "A"
        ? "bg-[linear-gradient(135deg,#007a1f_3px,#fff_3px)]"
        : "bg-white";
  return (
    <td className={`border-r border-b border-black p-0 ${fill} ${selected ? "relative z-10 outline-[3px] -outline-offset-1 outline-[#5ba731]" : ""}`}>
      <div className={`flex h-5 items-center overflow-hidden pt-[2px] leading-5 whitespace-pre ${styleFor(id, row, value)}`}>{value}</div>
    </td>
  );
}

function Sheet() {
  return (
    <div className="min-w-0 grow overflow-hidden bg-white">
      <table className="w-full table-fixed border-separate border-spacing-0 font-['Liberation_Serif','Noto_Sans_CJK_SC',serif] text-black">
        <colgroup>
          <col className="w-[29px]" />
          {columns.map((c) => <col key={c.id} className={c.col} />)}
          <col />
        </colgroup>
        <thead>
          <tr className="h-[15px] text-xs leading-3 text-[#444]">
            <th className="border-r border-b border-[#b5b5b5] bg-[#f0f0f0] p-0">
              <div className="flex justify-end pr-[2px]"><Draw w={9} h={9}><path d="M9 0v9H0z" fill="#b9b9b9" /></Draw></div>
            </th>
            {columns.map((c) => (
              <th
                key={c.id}
                scope="col"
                className={
                  c.id === "G"
                    ? "border-r border-b-2 border-r-[#b5b5b5] border-b-[#5ba731] bg-[#d7e6cf] p-0 font-normal text-[#3d8f1c]"
                    : "border-r border-b border-[#b5b5b5] bg-[#f0f0f0] p-0 font-normal"
                }
              >
                {c.id === "F" ? (
                  <div className="ml-[2px] h-[14px] border-l border-[#b5b5b5] pt-[2px]">{c.id}</div>
                ) : (
                  <div className="h-[13px] pt-px">{c.id}</div>
                )}
              </th>
            ))}
            <th className="border-b border-[#b5b5b5] bg-[#f0f0f0] p-0" />
          </tr>
          <tr className="h-8 text-[13px] leading-5">
            <th scope="row" className="border-r border-b border-r-[#b5b5b5] border-b-[#5ba731] bg-[#f0f0f0] p-0 text-xs font-normal text-[#444]">1</th>
            {columns.map((c) => (
              <th
                key={c.id}
                className={`border-r border-b border-r-black border-b-[#5ba731] p-0 pt-px font-bold whitespace-nowrap ${c.id === "C" || c.id === "G" ? "bg-[#00b0f0]" : "bg-[#00ccff]"} ${c.id === "M" || c.id === "N" ? "pl-[2px] text-left" : ""}`}
              >
                {c.title}
              </th>
            ))}
            <th className="overflow-hidden border-b border-[#5ba731] bg-[#00ccff] p-0 pl-[15px] text-left font-bold whitespace-nowrap">车辆</th>
          </tr>
        </thead>
        <tbody>
          {data.map(([row, ...values]) => (
            <tr key={row} className={rowHeight[row] ?? "h-[21px]"}>
              <th
                scope="row"
                className={
                  row === "677"
                    ? "border-r-2 border-b border-r-[#5ba731] border-b-[#c8c8c8] bg-[#d7e6cf] p-0 text-xs font-normal text-[#3d8f1c]"
                    : "border-r border-b border-r-[#b5b5b5] border-b-[#c8c8c8] bg-[#f0f0f0] p-0 text-xs font-normal text-[#444]"
                }
              >
                <div className="h-5 pt-[2px] leading-[18px]">{row}</div>
              </th>
              {values.map((v, i) => <Cell key={columns[i].id} id={columns[i].id} row={row} value={v} />)}
              <td className="border-b border-black bg-white p-0" />
            </tr>
          ))}
        </tbody>
      </table>
    </div>
  );
}

function VerticalScroll() {
  return (
    <div className="flex w-[19px] shrink-0 flex-col items-center bg-[#5a5b5d] pt-[7px] pb-[7px]">
      <span className="h-[2px] w-[13px] bg-[#3b3b3d]" />
      <button aria-label="向上滚动" className="mt-[13px]"><Draw w={9} h={5}><path d="M4.500 0L9 5H0z" fill="#c4c5c7" /></Draw></button>
      <span className="flex-[50]" />
      <span className="flex h-[19px] w-[13px] items-center justify-center bg-[#85868e]">
        <Draw w={7} h={9}><path d="M0 .5h7M0 4.500h7M0 8.500h7" stroke="#2e2f31" /></Draw>
      </span>
      <span className="flex-[10]" />
      <button aria-label="向下滚动"><Draw w={9} h={5}><path d="M0 0h9L4.500 5z" fill="#c4c5c7" /></Draw></button>
    </div>
  );
}

const sheetTabs = [
  { name: "CBU", cls: "w-[55px] border-r border-[#7a7b7d]" },
  { name: "MINI", cls: "w-[59px] border-r border-[#7a7b7d]" },
  { name: "展厅摆放车辆", cls: "w-[101px] border-r border-[#7a7b7d]" },
  { name: "代销或展销车辆", cls: "w-[113px] border-r border-[#7a7b7d]" },
  { name: "试驾车", cls: "w-[65px] border-r border-[#7a7b7d]" },
  { name: "2015年BMW已交车辆", cls: "w-[149px]" },
  { name: "2016年BMW已交车辆", cls: "w-[153px] bg-white text-[#444]" },
  { name: "后勤及售后用车", cls: "w-[113px] border-r border-[#7a7b7d]" },
  { name: "2015年MINI已交车辆", cls: "w-[147px] border-r border-[#7a7b7d]" },
  { name: "2016年MINI已交车辆", cls: "w-[147px] border-r border-[#7a7b7d]" },
];

function SheetTabs() {
  return (
    <div className="flex h-[25px] shrink-0 items-center bg-[#5a5b5d] text-xs text-[#c4c5c6]">
      <div className="flex w-[73px] shrink-0 items-center pl-2">
        <button aria-label="第一张" className="w-[17px]"><Draw w={8} h={9}><path d="M.8 0v9" stroke="#3f8f1a" strokeWidth="1.500" /><path d="M8 0v9L2.500 4.500z" fill="#3f8f1a" /></Draw></button>
        <button aria-label="上一张" className="w-[14px]"><Draw w={6} h={9}><path d="M6 0v9L0 4.500z" fill="#3f8f1a" /></Draw></button>
        <button aria-label="下一张" className="w-[18px]"><Draw w={6} h={9}><path d="M0 0v9l5-4.500z" fill="#77787a" /></Draw></button>
        <button aria-label="最后一张"><Draw w={8} h={9}><path d="M0 0v9l5-4.500z" fill="#66676a" /><path d="M6.500 0v9" stroke="#66676a" /></Draw></button>
      </div>
      {sheetTabs.map((t) => (
        <button key={t.name} className={`h-[25px] shrink-0 pt-[2px] pl-4 text-left whitespace-nowrap ${t.cls}`}>{t.name}</button>
      ))}
      <button aria-label="更多工作表" className="ml-[10px]">
        <Draw w={15} h={3}><path d="M0 0h3v3H0zM6 0h3v3H6zM12 0h3v3h-3z" fill="#4f9e24" /></Draw>
      </button>
      <button aria-label="插入工作表" className="ml-[10px]">
        <Draw w={11} h={11}><path d="M5.500 0v11M0 5.500h11" stroke="#c9cacb" strokeWidth="2" /></Draw>
      </button>
      <div className="mr-[25px] ml-auto flex items-center">
        <span className="h-[13px] w-[2px] bg-[#3b3b3d]" />
        <button aria-label="向左滚动" className="ml-3"><Draw w={5} h={9}><path d="M5 0v9L0 4.500z" fill="#c4c5c7" /></Draw></button>
        <span className="ml-[10px] flex h-[13px] w-11 items-center justify-center bg-[#85868e]">
          <Draw w={9} h={7}><path d="M.5 0v7M4.500 0v7M8.500 0v7" stroke="#2e2f31" /></Draw>
        </span>
        <button aria-label="向右滚动" className="mr-[14px] ml-6"><Draw w={5} h={9}><path d="M0 0v9l5-4.500z" fill="#c4c5c7" /></Draw></button>
        <span className="h-[13px] w-[2px] bg-[#3b3b3d]" />
      </div>
    </div>
  );
}

function StatusBar() {
  return (
    <div className="relative flex h-[22px] shrink-0 items-center bg-[#3b3b3d] text-xs text-[#e0e0e0]">
      <span className="ml-[131px]">
        <Draw w={14} h={14}>
          <circle cx="3" cy="3" r="2.500" fill="#77787a" />
          <path d="M6 2.500h7.500v11h-11V7M5 5.500h7M5 8.500h3M9.500 8.500h3M5 11h3M9.500 11h3" stroke="#8b8c8e" />
        </Draw>
      </span>
      <span className="absolute right-2 bottom-0 font-['Liberation_Sans'] text-2xl leading-6 text-black/15">www.wooyun.org</span>
      <div className="ml-auto flex items-center">
        <IconBtn label="历史" className="w-[30px]">
          <Draw w={14} h={12}><circle cx="8" cy="6" r="5.300" stroke="#66676a" strokeWidth="1.400" /><path d="M8 3v3.500h3M0 6l2.500 3L5 6" stroke="#66676a" strokeWidth="1.200" /></Draw>
        </IconBtn>
        <button aria-label="普通视图" className="flex h-[22px] w-[22px] items-center justify-center bg-[#6a7c60]">
          <Draw w={13} h={12}><path d="M0 0h13v12H0z" fill="#fff" /><path d="M0 3.500h13M0 8h13M4.300 0v12M8.700 0v12" stroke="#6a7c60" /></Draw>
        </button>
        <IconBtn label="分页预览" className="w-[30px]">
          <Draw w={13} h={12}><path d="M0 0h8v8H0zM10 0h3v8h-3zM0 9.500h8V12H0z" fill="#e6e6e6" /><path d="M0 2.500h8M0 5.500h8M2.500 0v12M5.500 0v12M10 4h3M8 11h5M11 9v3" stroke="#3b3b3d" strokeWidth=".9" /><path d="M9 11.500h4V9" stroke="#e6e6e6" strokeDasharray="2 1" /></Draw>
        </IconBtn>
        <button aria-label="阅读模式" className="ml-[5px] flex items-center gap-[7px]">
          <Draw w={14} h={12}><path d="M0 0h14v12H0z" fill="#e6e6e6" /><path d="M8 0v12M1 7h12" stroke="#3b3b3d" strokeWidth="2" /></Draw>
          <Draw w={5} h={4}><path d="M0 0h5L2.500 4z" fill="#b4b5b7" /></Draw>
        </button>
        <button aria-label="护眼模式" className="ml-[9px] flex items-center gap-[7px]">
          <Draw w={11} h={12}><path d="M0 0h11v12H0z" fill="#e6e6e6" /><circle cx="5.500" cy="4.500" r="2.700" fill="#2e2f31" /><path d="M4 8h3v3H4z" fill="#2e2f31" /></Draw>
          <Draw w={5} h={4}><path d="M0 0h5L2.500 4z" fill="#b4b5b7" /></Draw>
        </button>
        <span className="ml-[18px] w-[39px] whitespace-pre">85 %</span>
        <button aria-label="缩小"><Draw w={9} h={2}><path d="M0 1h9" stroke="#d4d5d6" strokeWidth="1.600" strokeDasharray="4 1" /></Draw></button>
        <input
          type="range"
          aria-label="显示比例"
          min={10}
          max={200}
          defaultValue={85}
          className="mr-[6px] ml-[10px] h-3 w-[134px] appearance-none bg-[linear-gradient(90deg,#5ba731_40%,#8b8c8e_40%)] bg-[length:100%_2px] bg-center bg-no-repeat [&::-webkit-slider-thumb]:h-[13px] [&::-webkit-slider-thumb]:w-[13px] [&::-webkit-slider-thumb]:appearance-none [&::-webkit-slider-thumb]:rounded-full [&::-webkit-slider-thumb]:bg-[#f0f0f0]"
        />
        <button aria-label="放大" className="mr-[6px]"><Draw w={10} h={2}><path d="M0 1h10" stroke="#d4d5d6" strokeWidth="1.600" strokeDasharray="4 1" /></Draw></button>
      </div>
    </div>
  );
}

/* ---------- Desktop taskbar ---------- */

const ChromeIcon = () => (
  <Draw w={15} h={15}>
    <circle cx="7.500" cy="7.500" r="7.500" fill="#f2c230" />
    <path d="M1 4a7.500 7.500 0 0 1 13 0H7.500L4 9z" fill="#dd4b39" />
    <path d="M1 4l4 7 3 4A7.500 7.500 0 0 1 1 4z" fill="#3a9a48" />
    <circle cx="7.500" cy="7.500" r="3.300" fill="#4a8df0" stroke="#fff" />
  </Draw>
);

function TaskButton({ icon, title, active = false }: { icon: ReactNode; title: string; active?: boolean }) {
  return (
    <button className={`mt-[3px] flex h-6 w-[158px] shrink-0 items-center gap-2 overflow-hidden rounded-xs pl-2 whitespace-nowrap ${active ? "border border-[#123c8c] bg-[#1c50b8]" : "border-t border-[#6fa5f8] bg-[#3a7cf0]"}`}>
      {icon}
      {title}
    </button>
  );
}

const Penguin = () => (
  <Draw w={15} h={15}>
    <ellipse cx="7.500" cy="7.500" rx="5.500" ry="7" fill="#111" />
    <path d="M1 10q2-3 2-5M14 10q-2-3-2-5" stroke="#111" strokeWidth="2" />
    <ellipse cx="5.800" cy="4.500" rx="1.400" ry="1.800" fill="#fff" /><ellipse cx="9.200" cy="4.500" rx="1.400" ry="1.800" fill="#fff" />
    <path d="M4.500 7h6l-3 1.800z" fill="#f7a51c" /><path d="M2 9q5.500 3 11 0v2.500q-5.500 3-11 0z" fill="#e02b20" />
  </Draw>
);

const SogouBadge = () => (
  <Draw w={15} h={15}><path d="M0 0h15v15H0z" fill="#f0501e" /><path d="M11.500 4H6Q3 4 3.500 6t4 2 3.500 3-3 2H3" stroke="#fff" strokeWidth="2" /></Draw>
);

function Taskbar() {
  return (
    <footer className="h-[17px] shrink-0 overflow-hidden bg-[#2257d5] font-['Liberation_Sans','Noto_Sans_CJK_SC',sans-serif] text-xs text-white">
      <div className="flex h-[30px] items-start bg-[linear-gradient(180deg,#4a90ee_0px,#3a7be4_2px,#245ddb_5px,#2257d5_16px)]">
        <button className="flex h-[30px] w-[97px] shrink-0 items-center gap-[7px] rounded-r-xl bg-[linear-gradient(180deg,#6fae68_0px,#3f9440_4px,#358a36_14px)] pb-[6px] pl-[11px]">
          <Draw w={20} h={20} className="mt-2 shrink-0">
            <path d="M3 2q4-3 7 0l-1 7Q5 7 2 9z" fill="#e8512a" /><path d="M11 2q4 3 8 0l-1 7q-4 2-8 0z" fill="#8cc63f" />
            <path d="M2 10q4-2 7 0l-1 7q-4-2-7 0z" fill="#4a8df0" /><path d="M10 10q4 3 8 0l-1 7q-4 2-8 0z" fill="#f7c52e" />
          </Draw>
          <span className="pt-[3px] text-lg leading-5 italic">开始</span>
        </button>
        <div className="flex w-[103px] shrink-0 gap-2 pt-[7px] pl-[13px]">
          <Draw w={15} h={15}><path d="M13 8H4q0-5 4-5 3 0 3.500 3M4 9q1 5 8 3" stroke="#7fc4f5" strokeWidth="2.400" /><path d="M1 13Q3 4 14 1" stroke="#f7c52e" strokeWidth="1.500" /></Draw>
          <ChromeIcon />
          <Draw w={15} h={15}><path d="M0 2q7-3 13 0v13H0z" fill="#dbe9f6" /><circle cx="6" cy="8" r="3.500" stroke="#2b4a6f" strokeWidth="1.400" /><path d="M7 8l7-8" stroke="#ef8b1f" strokeWidth="2" /></Draw>
          <Draw w={9} h={6} className="ml-1 shrink-0"><path d="M1 0l3 3-3 3M5 0l3 3-3 3" stroke="#cfe0ff" strokeWidth="1.300" /></Draw>
        </div>
        <div className="flex gap-[2px]">
          <TaskButton active title="长沙实际库存表20" icon={<Draw w={16} h={16}><rect width="16" height="16" rx="3" fill="#17b530" /><path d="M12 4.500H5.500Q4 5 4 6.500T5.500 8h5q1.500 0 1.500 1.500T10.500 11H4" stroke="#fff" strokeWidth="1.800" /></Draw>} />
          <TaskButton title="WooYun.org | 提" icon={<ChromeIcon />} />
          <TaskButton title="4-27.txt - 记事本" icon={<Draw w={14} h={16}><path d="M1 1h11l2 15H3z" fill="#8ed0e8" /><path d="M1 1h11v3H1z" fill="#e6f3e0" /></Draw>} />
          <TaskButton title="Coremail邮件系统" icon={<Draw w={16} h={16}><circle cx="8" cy="8" r="7.500" fill="#e8442f" /><path d="M8 8V.5A7.500 7.500 0 0 1 15.500 8z" fill="#9b3fd0" /><path d="M8 8h7.500A7.500 7.500 0 0 1 8 15.500z" fill="#39b54a" /><path d="M8 8L2 3.500A7.500 7.500 0 0 1 8 .5z" fill="#f3a0e0" /><circle cx="8" cy="8" r="2" fill="#fff" /></Draw>} />
        </div>
        <div className="ml-auto flex items-start">
          <span className="pt-[7px] pr-[20px]"><SogouBadge /></span>
          <div className="flex h-[30px] w-[131px] items-start gap-1 border-l border-[#0d3fa8] bg-[linear-gradient(180deg,#3fc0f5_0px,#1a9cec_3px,#1490e4_16px)] pt-[6px] pl-[10px]">
            <Penguin />
            <Penguin />
            <Draw w={14} h={15}><path d="M2 3h5l5-3v14L7 11H2z" fill="#8e979f" /><circle cx="6" cy="7" r="3" fill="#c8ced3" /></Draw>
            <Draw w={15} h={15}><path d="M0 2q7.500-3 15 0-1 9-7.500 13Q1 11 0 2z" fill="#fff" /><path d="M3 4h9q-1 5-4.500 8Q4 9 3 4z" fill="#2a7de0" /><path d="M4 5l3.500 4L11 5" stroke="#fff" strokeWidth="1.500" /></Draw>
            <span className="leading-4">08:56</span>
          </div>
        </div>
      </div>
    </footer>
  );
}

/* ---------- Floating tools ---------- */

function ImeBar() {
  return (
    <div className="absolute top-[580px] right-6 z-20 flex h-6 w-[183px] items-center justify-between border border-[#b9c9dc] bg-[linear-gradient(180deg,#fff,#eef3f9)] pr-[3px] shadow-sm">
      <Draw w={29} h={28} className="-ml-[3px] shrink-0">
        <path d="M1 6q0-2 2-2.500L22 0q2 0 2.500 2L28 20q0 2-2 3L8 27q-2 0-3-2z" fill="#f4511e" />
        <path d="M20 7.500Q10 5 8 9.500q0 3 6 3.500t6 4Q18 21 9 19" stroke="#fff" strokeWidth="3.400" strokeLinecap="round" />
      </Draw>
      <button aria-label="中文" className="ml-1"><Draw w={14} h={14}><path d="M1 4h12v5H1zM7 0v14" stroke="#2074c8" strokeWidth="2.200" /></Draw></button>
      <button aria-label="半角"><Draw w={14} h={14}><path d="M9 1q5 2 4 7-3 6-9 4-3-1-4-4 10 1 9-7z" fill="#2074c8" /></Draw></button>
      <button aria-label="标点"><Draw w={12} h={12}><circle cx="2.800" cy="3" r="2" stroke="#2074c8" strokeWidth="1.400" /><path d="M7 6h4v3q-1 3-3.500 3V10.500Q9 10 9 9.500H7z" fill="#2074c8" /></Draw></button>
      <button aria-label="软键盘"><Draw w={16} h={12}><rect width="16" height="12" rx="1" fill="#2074c8" /><path d="M2 3h12M2 6h12" stroke="#fff" strokeWidth="1.600" strokeDasharray="2 1" /><path d="M2 9h2M5 9h6M12 9h2" stroke="#fff" strokeWidth="1.600" /></Draw></button>
      <button aria-label="账户"><Draw w={12} h={14}><circle cx="6" cy="3.500" r="3" fill="#b0bcd3" /><path d="M2.500 7h7q2.500 1 2.500 4H10v1.500Q6 15 2 12.500V11H0q0-3 2.500-4z" fill="#b0bcd3" /></Draw></button>
      <button aria-label="换肤"><Draw w={14} h={13}><path d="M4 0q3 2 6 0l4 2.500L12.500 6 11 5.500V13H3V5.500L1.500 6 0 2.500z" fill="#2074c8" /></Draw></button>
      <button aria-label="工具箱"><Draw w={14} h={14}><path d="M2 12l6-6" stroke="#2074c8" strokeWidth="3" strokeLinecap="round" /><path d="M10.500.3Q6.500 0 5.800 4T8.500 8.500t5-2 .3-3.500L11 5.500 8.500 5 8.300 2.500z" fill="#2074c8" /></Draw></button>
    </div>
  );
}

function VolumeMeter() {
  return (
    <div aria-hidden="true" className="absolute top-[652px] right-0 z-20 flex h-[57px] w-2 flex-col items-end rounded-l-sm border border-r-0 border-[#15161c] bg-[#2c3040] py-[5px] pr-px">
      <span className="h-[22px] w-1 bg-[repeating-linear-gradient(180deg,#11131a_0px,#11131a_1px,#2c3040_1px,#2c3040_2px)]" />
      <span className="h-3 w-1 bg-[repeating-linear-gradient(180deg,#b5d04a_0px,#b5d04a_1px,#2c3040_1px,#2c3040_2px)]" />
      <span className="h-3 w-1 bg-[repeating-linear-gradient(180deg,#4fcf9a_0px,#4fcf9a_1px,#2c3040_1px,#2c3040_2px)]" />
    </div>
  );
}

export default function App() {
  return (
    <div className="relative flex h-screen flex-col overflow-hidden bg-[#3b3b3d] font-['Open_Sans','Noto_Sans_CJK_SC',sans-serif]">
      <TitleBar />
      <Ribbon />
      <DocBar />
      <main className="flex min-h-0 grow">
        <div className="flex min-w-0 grow flex-col">
          <FormulaBar />
          <div className="flex min-h-0 grow overflow-hidden">
            <Sheet />
            <VerticalScroll />
          </div>
          <SheetTabs />
        </div>
        <aside className="w-[7px] shrink-0 bg-[#3b3b3d] pt-[332px]">
          <button aria-label="展开任务窗格" className="flex h-[100px] w-[7px] items-center justify-center bg-[#5ba731]">
            <Draw w={3} h={5}><path d="M3 0v5L0 2.500z" fill="#fff" /></Draw>
          </button>
        </aside>
      </main>
      <StatusBar />
      <Taskbar />
      <ImeBar />
      <VolumeMeter />
    </div>
  );
}
